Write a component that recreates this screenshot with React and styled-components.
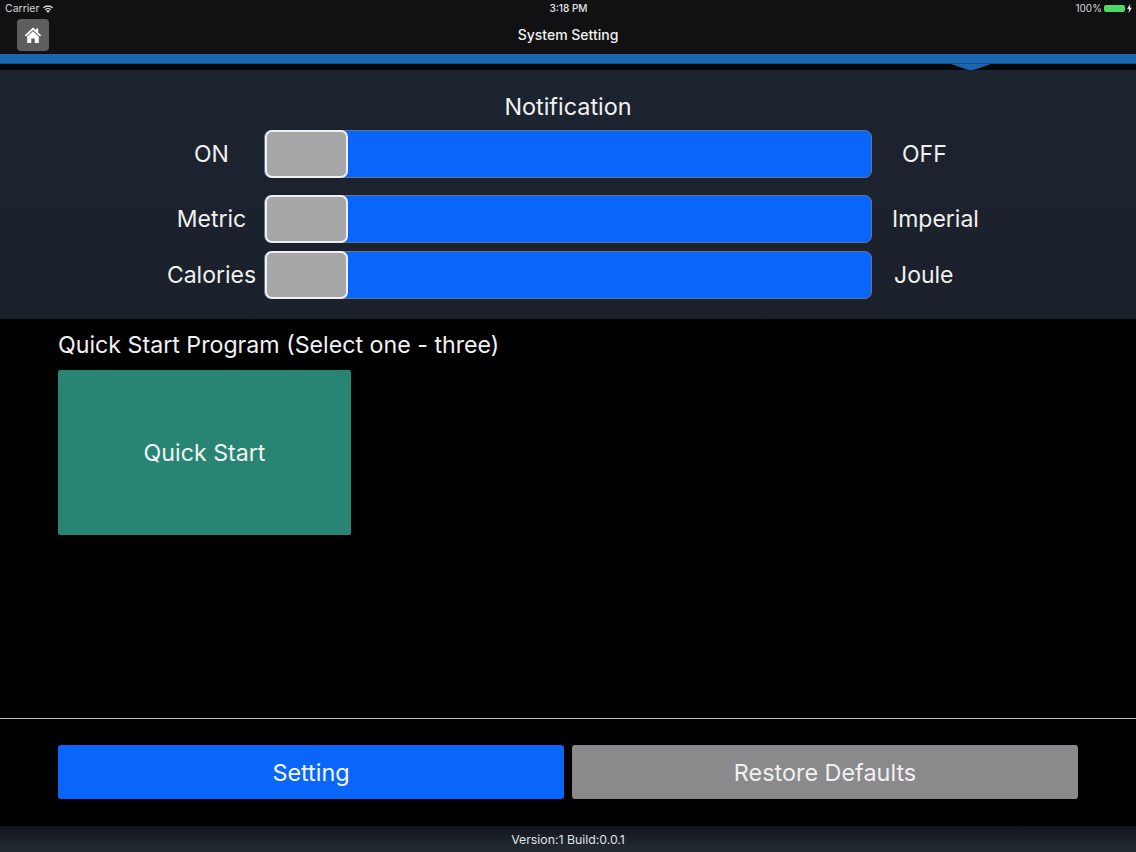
import styled, { createGlobalStyle } from "styled-components";

const Global = createGlobalStyle`
  html, body { margin: 0; padding: 0; background: #000; }
  body { font-family: Inter, "Liberation Sans", sans-serif; color: #fff; }
`;

const Page = styled.div`
  width: 1136px;
  height: 852px;
  display: flex;
  flex-direction: column;
  background: #000;
  overflow: hidden;
`;

const Header = styled.header`
  height: 54px;
  background: #111114;
  display: flex;
  flex-direction: column;
`;

const StatusBar = styled.div`
  height: 16px;
  padding: 0 4px 0 5px;
  display: grid;
  grid-template-columns: 1fr auto 1fr;
  align-items: center;
  font-size: 10.5px;
  color: #d4d4d6;
`;

const StatusLeft = styled.div`
  display: flex;
  align-items: center;
  gap: 3px;
`;

const StatusRight = styled.div`
  display: flex;
  align-items: center;
  justify-content: flex-end;
  gap: 2px;
`;

const Clock = styled.span`
  color: #e4e4e6;
  font-weight: 500;
  font-size: 10px;
`;

const Percent = styled.span`
  font-size: 10px;
`;

const Battery = styled.span`
  width: 20px;
  height: 7px;
  margin-right: 1px;
  background: #4cd964;
  border-radius: 2px;
  box-shadow: 1px 0 0 0 #4cd964;
`;

const NavBar = styled.div`
  flex: 1;
  padding: 0 17px;
  display: grid;
  grid-template-columns: 1fr auto 1fr;
  align-items: center;
`;

const HomeButton = styled.button`
  width: 32px;
  height: 32px;
  margin-top: -1px;
  padding: 0;
  border: 0;
  border-radius: 4px;
  background: #5e5e60;
  display: flex;
  align-items: center;
  justify-content: center;
`;

const NavTitle = styled.div`
  font-size: 14px;
  font-weight: 500;
  color: #f0f0f0;
  margin-top: -2px;
`;

const BlueBand = styled.div`
  height: 10px;
  background: #1a66b0;
  box-shadow: inset 0 -1px 0 #124f8c;
`;

const BandGap = styled.div`
  height: 6px;
  background: #03060a;
  position: relative;
`;

const Notch = styled.svg`
  position: absolute;
  left: 951px;
  top: 0;
  width: 40px;
  height: 6px;
  display: block;
`;

const Panel = styled.section`
  height: 249px;
  box-sizing: border-box;
  padding-top: 23px;
  background: linear-gradient(#1c2430, #1b212b);
  display: flex;
  flex-direction: column;
`;

const PanelTitle = styled.div`
  font-size: 23.4px;
  line-height: 27px;
  text-align: center;
  color: #f2f2f2;
  margin-bottom: 10px;
`;

const ToggleRow = styled.div`
  display: grid;
  grid-template-columns: 264px 608px 1fr;
  align-items: center;
  height: 48px;
  margin-top: ${(p) => p.$gap || 0}px;
`;

const LeftLabel = styled.div`
  padding: 1px 0 0 159px;
  text-align: center;
  font-size: 23px;
  line-height: 29px;
  color: #f0f0f0;
  white-space: nowrap;
`;

const RightLabel = styled.div`
  padding: 1px 0 0 ${(p) => p.$indent}px;
  font-size: 23px;
  line-height: 29px;
  color: #f0f0f0;
`;

const Track = styled.div`
  height: 48px;
  box-sizing: border-box;
  border: 1px solid #66768e;
  border-radius: 7px;
  background: #0a66fa;
  display: flex;
`;

const Thumb = styled.div`
  width: 83px;
  height: 48px;
  margin: -1px 0 0 0;
  box-sizing: border-box;
  border: 2px solid #eef0f2;
  border-radius: 7px;
  background: #a7a7a7;
`;

const Main = styled.main`
  flex: 1;
  padding: 12px 58px 0;
  display: flex;
  flex-direction: column;
`;

const SectionTitle = styled.div`
  font-size: 23.2px;
  line-height: 28px;
  color: #f2f2f2;
  margin-bottom: 11px;
`;

const QuickStart = styled.button`
  width: 293px;
  height: 165px;
  border: 0;
  padding: 0;
  border-radius: 2px;
  background: #288473;
  color: #f2f6f5;
  font: inherit;
  font-size: 23.2px;
`;

const Actions = styled.div`
  height: 108px;
  box-sizing: border-box;
  border-top: 1px solid #c4c4c4;
  padding: 26px 58px 27px;
  display: grid;
  grid-template-columns: 506px 506px;
  gap: 8px;
`;

const ActionButton = styled.button`
  border: 0;
  padding: 0;
  border-radius: 3px;
  background: ${(p) => (p.$muted ? "#8a8a8c" : "#0a66fa")};
  color: ${(p) => (p.$muted ? "#f0f0f0" : "#f2f8ff")};
  font: inherit;
  font-size: 23.4px;
`;

const Footer = styled.footer`
  height: 26px;
  background: linear-gradient(#11161b, #252c33);
  display: flex;
  align-items: center;
  justify-content: center;
  font-size: 12.3px;
  color: #dfe2e4;
`;

const toggles = [
  { left: "ON", right: "OFF", indent: 30, gap: 0 },
  { left: "Metric", right: "Imperial", indent: 20, gap: 17 },
  { left: "Calories", right: "Joule", indent: 22, gap: 8 },
];

function Wifi() {
  return (
    <svg width="12" height="9" viewBox="0 0 12 9">
      <path d="M6 9 4 6.8a3 3 0 0 1 4 0Z" fill="#d4d4d6" />
      <path d="M2.6 5.3a5 5 0 0 1 6.8 0l-.8.9a3.8 3.8 0 0 0-5.200 0Z" fill="#d4d4d6" />
      <path d="M.8 3.300a7.700 7.700 0 0 1 10.400 0l-.9 1a6.400 6.400 0 0 0-8.600 0Z" fill="#d4d4d6" />
    </svg>
  );
}

function Bolt() {
  return (
    <svg width="5" height="9" viewBox="0 0 5 9">
      <path d="M3.200 0 0 5h2l-.4 4L5 3.800H3Z" fill="#e4e4e6" />
    </svg>
  );
}

function HomeIcon() {
  return (
    <svg width="18" height="18" viewBox="0 0 18 18">
      <path d="M9 1.500 0.800 9.200 2 10.400 9 3.900l7 6.500 1.200-1.200-3-2.800V2.500h-2.100v1.700Z" fill="#fff" />
      <path d="M9 5.200 3.200 10.500V17h4.100v-4.600h3.400V17h4.100v-6.500Z" fill="#fff" />
    </svg>
  );
}

export default function App() {
  return (
    <Page>
      <Global />
      <Header>
        <StatusBar>
          <StatusLeft>
            Carrier <Wifi />
          </StatusLeft>
          <Clock>3:18 PM</Clock>
          <StatusRight>
            <Percent>100%</Percent> <Battery /> <Bolt />
          </StatusRight>
        </StatusBar>
        <NavBar>
          <HomeButton aria-label="Home">
            <HomeIcon />
          </HomeButton>
          <NavTitle>System Setting</NavTitle>
        </NavBar>
      </Header>
      <BlueBand />
      <BandGap>
        <Notch viewBox="0 0 40 6">
          <path d="M0 0H40L24 5.500Q20 6.500 16 5.500Z" fill="#1a66b0" />
        </Notch>
      </BandGap>
      <Panel>
        <PanelTitle>Notification</PanelTitle>
        {toggles.map((t) => (
          <ToggleRow key={t.left} $gap={t.gap}>
            <LeftLabel>{t.left}</LeftLabel>
            <Track>
              <Thumb />
            </Track>
            <RightLabel $indent={t.indent}>{t.right}</RightLabel>
          </ToggleRow>
        ))}
      </Panel>
      <Main>
        <SectionTitle>Quick Start Program (Select one - three)</SectionTitle>
        <QuickStart>Quick Start</QuickStart>
      </Main>
      <Actions>
        <ActionButton>Setting</ActionButton>
        <ActionButton $muted>Restore Defaults</ActionButton>
      </Actions>
      <Footer>Version:1 Build:0.0.1</Footer>
    </Page>
  );
}
